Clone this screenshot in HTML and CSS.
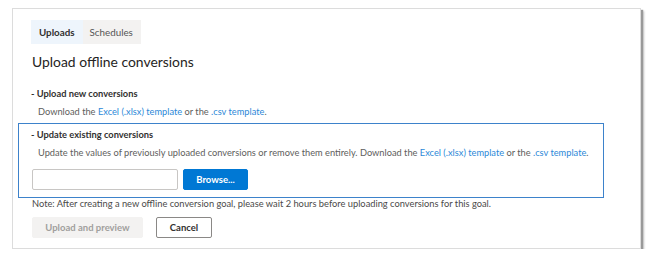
FILE: index.html
```html
<!DOCTYPE html>
<html lang="en">
<head>
    <meta charset="UTF-8">
    <title>Upload offline conversions</title>
    <link rel="stylesheet" href="styles.css">
</head>
<body>
    <div class="panel">
        <div class="tabs">
            <div class="tab active">Uploads</div>
            <div class="tab">Schedules</div>
        </div>

        <h1 class="title">Upload offline conversions</h1>

        <div class="section">
            <div class="section-title">- Upload new conversions</div>
            <div class="section-desc">Download the <a href="#">Excel (.xlsx) template</a> or the <a href="#">.csv template</a>.</div>
        </div>

        <div class="section boxed">
            <div class="section-title">- Update existing conversions</div>
            <div class="section-desc">Update the values of previously uploaded conversions or remove them entirely. Download the <a href="#">Excel (.xlsx) template</a> or the <a href="#">.csv template</a>.</div>
            <div class="file-row">
                <input class="file-input" type="text">
                <button class="btn primary">Browse...</button>
            </div>
        </div>

        <div class="note">Note: After creating a new offline conversion goal, please wait 2 hours before uploading conversions for this goal.</div>

        <div class="actions">
            <button class="btn disabled">Upload and preview</button>
            <button class="btn default">Cancel</button>
        </div>
    </div>
</body>
</html>
```

FILE: styles.css
```css
body {
    margin: 0;
    background: #ffffff;
    font-family: Lato, 'Open Sans', sans-serif;
    color: #323130;
}
.panel {
    box-sizing: border-box;
    width: 629px;
    height: 241px;
    margin: 8px 0 0 12px;
    padding: 11px 0 0 18px;
    background: #fff;
    border: 1px solid #dcdcdc;
    box-shadow: 2px 2px 1px #999999, 3px 3px 2px #c4c4c4;
}
.tabs {
    display: flex;
}
.tab {
    height: 24px;
    line-height: 24px;
    padding: 0 8px;
    font-size: 9.8px;
    font-weight: 700;
    color: #6b6a69;
    background: #f3f2f1;
}
.tab + .tab {
    padding: 0 8px 0 7px;
    font-weight: 400;
    color: #555;
}
.tab.active {
    color: #323130;
    background: #eef5fc;
}
.title {
    margin: 8px 0 0 1px;
    font-size: 13.9px;
    font-weight: 400;
    line-height: 20px;
    color: #252423;
}
.section {
    margin-top: 14px;
}
.section-title {
    font-size: 9.3px;
    font-weight: 700;
    line-height: 16px;
}
.section-desc {
    margin-top: 2px;
    padding-left: 7px;
    font-size: 9.25px;
    line-height: 15px;
    color: #605e5c;
    white-space: nowrap;
}
a {
    color: #2b88d8;
    text-decoration: none;
}
.boxed {
    box-sizing: border-box;
    width: 586px;
    height: 75px;
    margin: 4px 0 0 -13px;
    padding: 3px 0 0 12px;
    border: 1.5px solid #3d82cb;
}
.boxed .section-desc {
    margin-top: 2px;
}
.file-row {
    display: flex;
    gap: 5px;
    margin-top: 9px;
    padding-left: 1px;
}
.file-input {
    box-sizing: border-box;
    width: 146px;
    height: 21px;
    margin: 0;
    border: 1px solid #c8c6c4;
    border-radius: 2px;
}
.btn {
    box-sizing: border-box;
    height: 21px;
    margin: 0;
    padding: 0;
    font-family: inherit;
    font-size: 9.5px;
    font-weight: 700;
    border-radius: 2px;
}
.btn.primary {
    width: 65px;
    background: #0078d4;
    border: 1px solid #0078d4;
    color: #fff;
}
.note {
    margin: -1px 0 0 1px;
    font-size: 9.3px;
    line-height: 14px;
    color: #4a4948;
}
.actions {
    display: flex;
    gap: 13px;
    margin: 6px 0 0 1px;
}
.btn.disabled {
    width: 111px;
    background: #f3f2f1;
    border: 1px solid #f3f2f1;
    color: #a19f9d;
}
.btn.default {
    width: 56px;
    background: #fff;
    border: 1px solid #8a8886;
    color: #323130;
}
```
